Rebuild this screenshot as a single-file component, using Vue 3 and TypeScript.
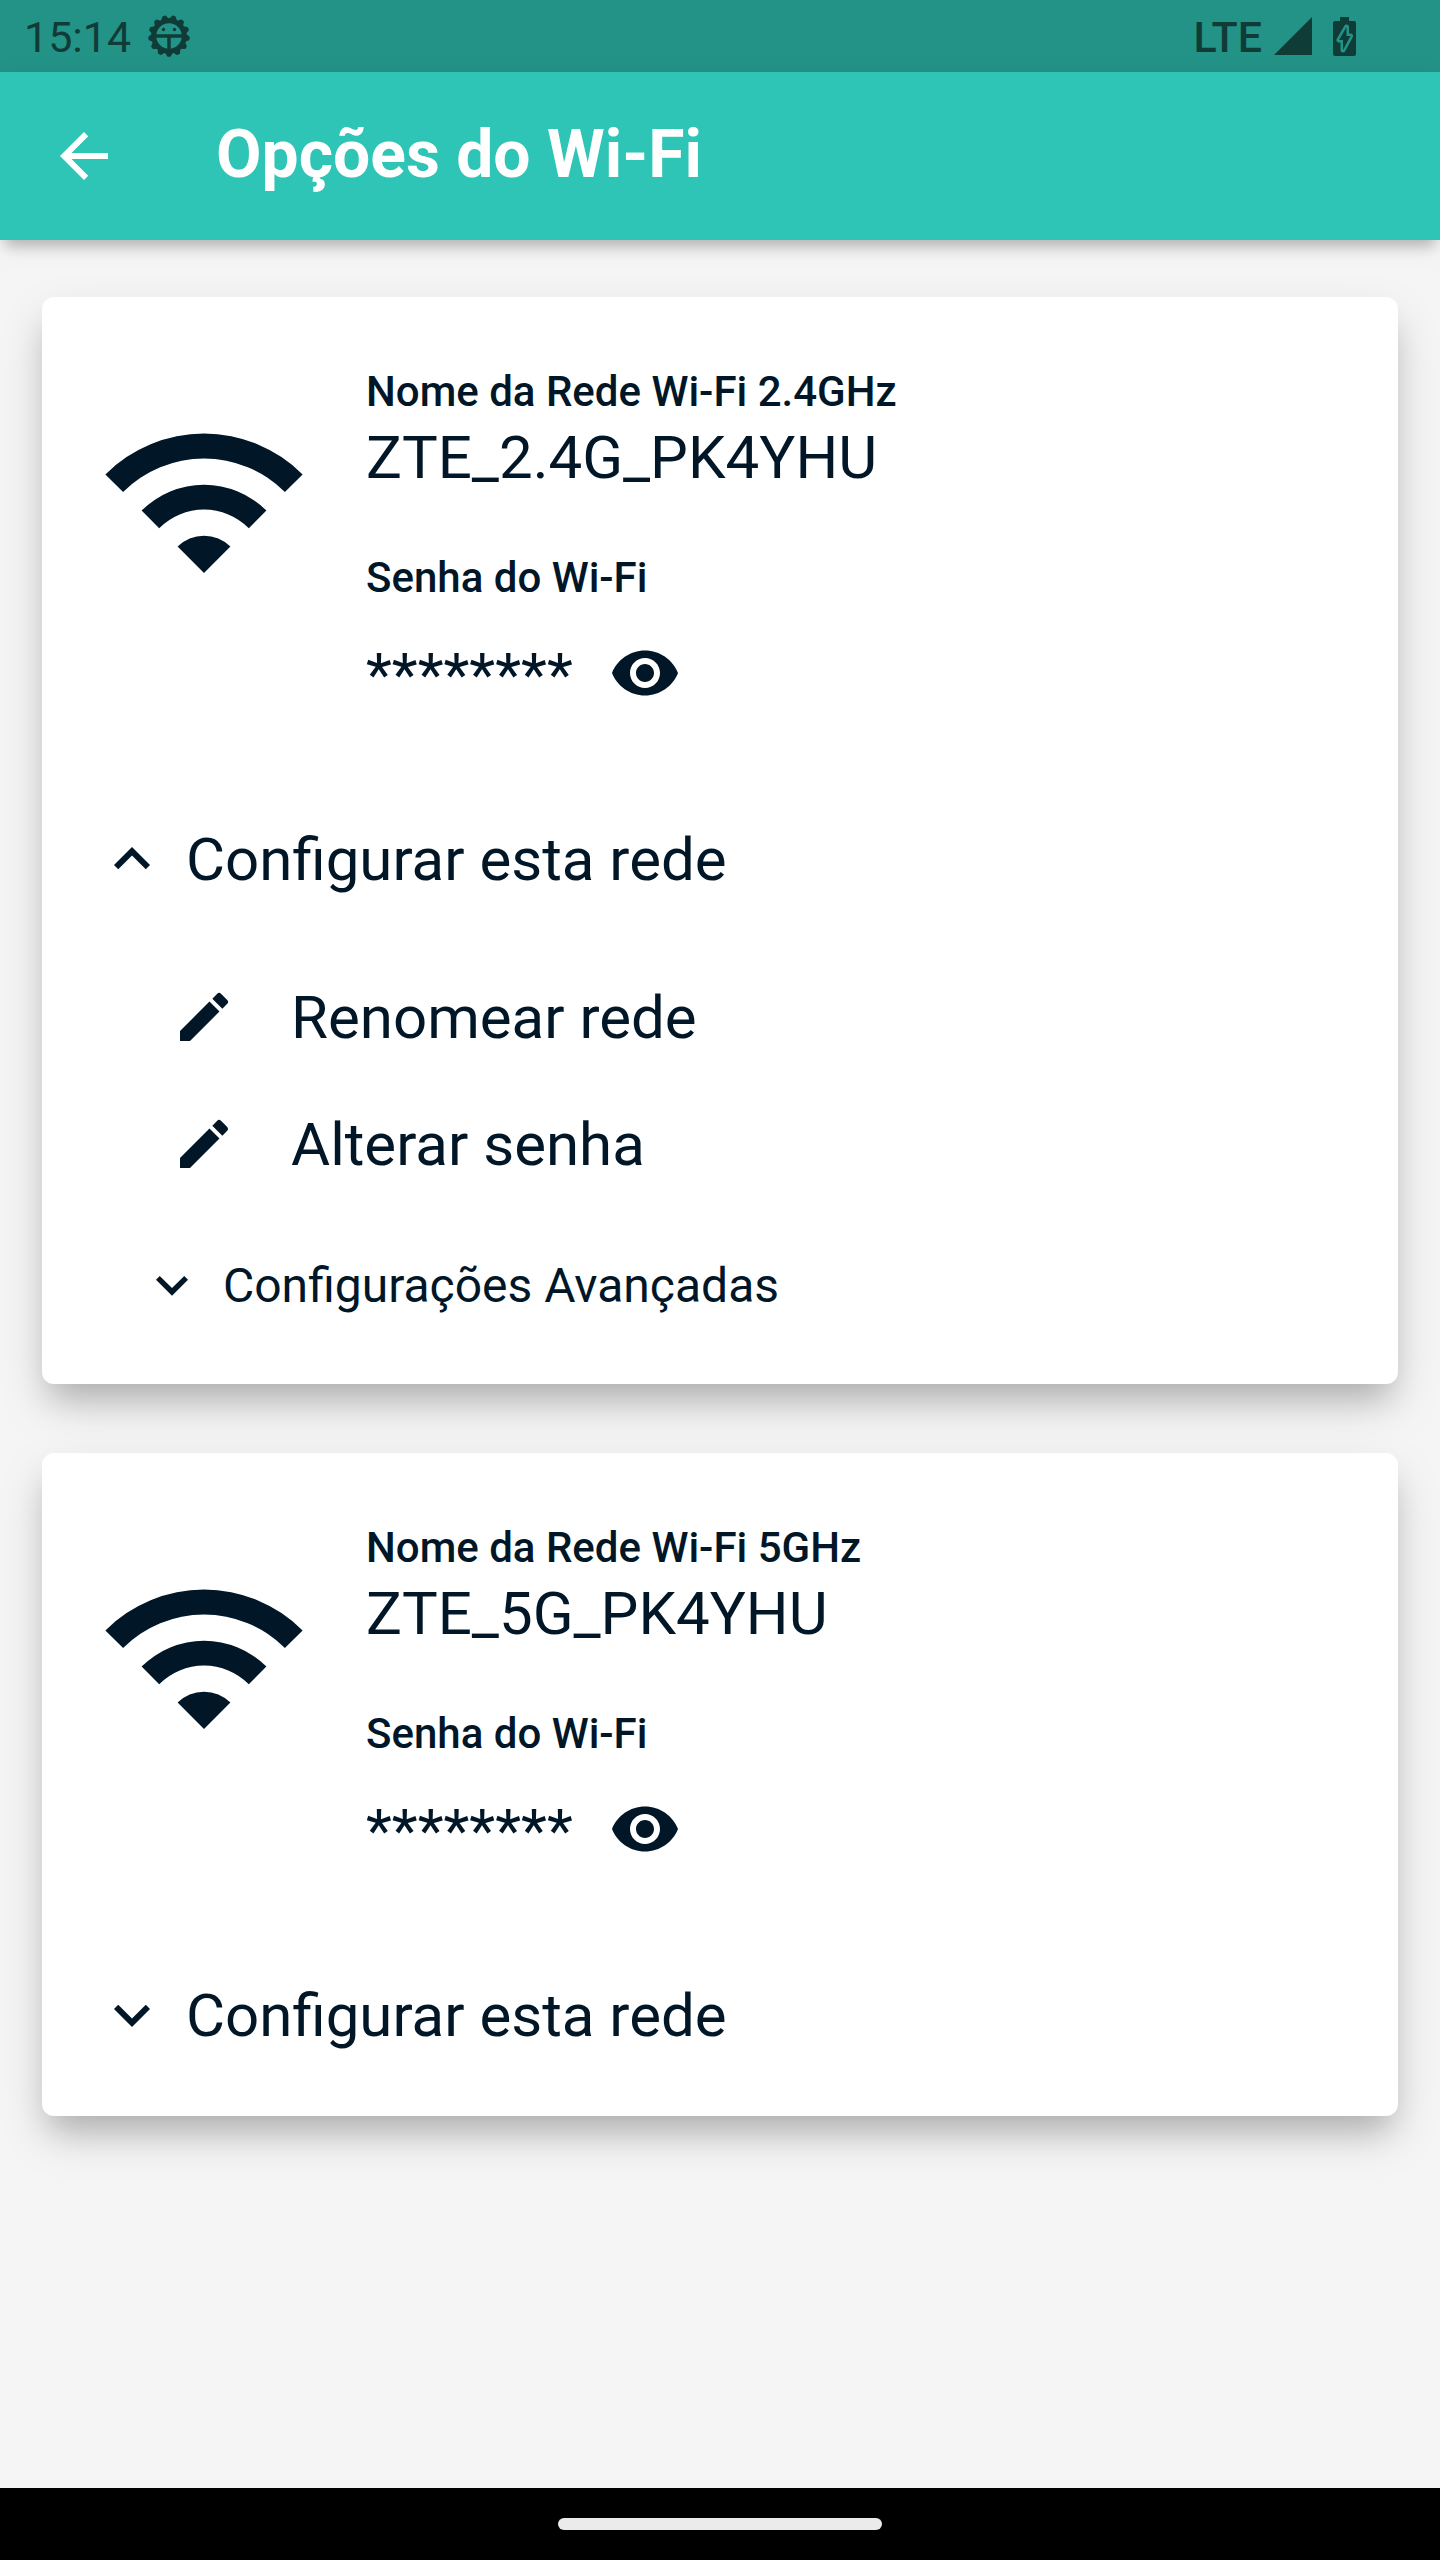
<script setup lang="ts">
import { reactive } from 'vue'

interface Network {
  id: string
  band: string
  ssid: string
  expanded: boolean
}

const networks = reactive<Network[]>([
  { id: 'wifi-24', band: '2.4GHz', ssid: 'ZTE_2.4G_PK4YHU', expanded: true },
  { id: 'wifi-5', band: '5GHz', ssid: 'ZTE_5G_PK4YHU', expanded: false },
])

const actions = ['Renomear rede', 'Alterar senha']

// One tooth points straight down, the others are spread evenly round the ring.
const teeth = Array.from({ length: 13 }, (_, i) => 180 + (i * 360) / 13)
</script>

<template>
  <div class="screen">
    <div class="status-bar">
      <span class="clock">15:14</span>
      <svg class="gear" viewBox="-21 -21 42 42" aria-hidden="true">
        <circle r="15.250" fill="none" stroke="currentColor" stroke-width="5" />
        <path
          v-for="angle in teeth"
          :key="angle"
          d="M-3.500-16L-1.200-20H1.200L3.500-16z"
          :transform="`rotate(${angle})`"
          fill="currentColor"
          stroke="currentColor"
          stroke-width="1.500"
          stroke-linejoin="round"
        />
        <path d="M-14 0H14M0 0V14" fill="none" stroke="currentColor" stroke-width="3.500" />
        <circle cx="-5.500" cy="-6.500" r="1.700" fill="currentColor" />
        <circle cx="5.500" cy="-6.500" r="1.700" fill="currentColor" />
      </svg>
      <span class="carrier">LTE</span>
      <svg class="signal" viewBox="0 0 38 38" aria-hidden="true">
        <path d="M38 0V38H0z" fill="currentColor" />
      </svg>
      <svg class="battery" viewBox="0 0 23 39" aria-hidden="true">
        <path d="M7 0h9v4h5a2 2 0 0 1 2 2v31a2 2 0 0 1-2 2H2a2 2 0 0 1-2-2V6a2 2 0 0 1 2-2h5z" fill="currentColor" />
        <path
          class="bolt"
          d="M13.500 10L6 23h4V33L17.500 19H13.500z"
          fill="currentColor"
          stroke-width="5"
          stroke-linejoin="round"
        />
      </svg>
    </div>

    <header class="app-bar">
      <button class="icon-button" type="button" aria-label="Voltar">
        <svg class="icon" viewBox="0 0 24 24" aria-hidden="true">
          <path d="M20 11H7.830l5.590-5.590L12 4l-8 8 8 8 1.410-1.410L7.830 13H20z" fill="currentColor" />
        </svg>
      </button>
      <h1 class="title">Opções do Wi-Fi</h1>
    </header>

    <main class="content">
      <section v-for="network in networks" :key="network.id" class="card">
        <div class="summary">
          <svg class="wifi" viewBox="-108 -150 216 216" aria-hidden="true">
            <path
              d="M0 0L-26.400-26.400A37.400 37.400 0 0 1 26.400-26.400zM-44.800-44.800L-62.400-62.400A88.300 88.300 0 0 1 62.400-62.400L44.800-44.800A63.300 63.300 0 0 0-44.800-44.800zM-80.900-80.900L-98.600-98.600A139.400 139.400 0 0 1 98.600-98.600L80.900-80.900A114.400 114.400 0 0 0-80.900-80.900z"
              fill="currentColor"
            />
          </svg>
          <dl class="details">
            <dt class="label">Nome da Rede Wi-Fi {{ network.band }}</dt>
            <dd class="ssid">{{ network.ssid }}</dd>
            <dt class="label">Senha do Wi-Fi</dt>
            <dd class="password">
              <span class="mask">********</span>
              <button class="icon-button" type="button" aria-label="Mostrar senha">
                <svg class="icon" viewBox="0 0 24 24" aria-hidden="true">
                  <path
                    d="M12 4.500C7 4.500 2.730 7.610 1 12c1.730 4.390 6 7.500 11 7.500s9.270-3.110 11-7.500c-1.730-4.390-6-7.500-11-7.500zM12 17c-2.760 0-5-2.240-5-5s2.240-5 5-5 5 2.240 5 5-2.240 5-5 5zm0-8c-1.660 0-3 1.340-3 3s1.340 3 3 3 3-1.340 3-3-1.340-3-3-3z"
                    fill="currentColor"
                  />
                </svg>
              </button>
            </dd>
          </dl>
        </div>

        <button
          class="toggle"
          type="button"
          :aria-expanded="network.expanded"
          @click="network.expanded = !network.expanded"
        >
          <svg class="icon" viewBox="0 0 24 24" aria-hidden="true">
            <path v-if="network.expanded" d="M12 8l-6 6 1.410 1.410L12 10.830l4.590 4.580L18 14z" fill="currentColor" />
            <path v-else d="M16.590 8.590L12 13.170 7.410 8.590 6 10l6 6 6-6z" fill="currentColor" />
          </svg>
          <span class="caption">Configurar esta rede</span>
        </button>

        <div v-if="network.expanded" class="submenu">
          <button v-for="action in actions" :key="action" class="action" type="button">
            <svg class="icon-small" viewBox="0 0 24 24" aria-hidden="true">
              <path
                d="M3 17.250V21h3.750L17.810 9.940l-3.750-3.750L3 17.250zM20.710 7.040a1 1 0 0 0 0-1.410l-2.340-2.340a1 1 0 0 0-1.410 0l-1.830 1.830 3.750 3.750 1.830-1.830z"
                fill="currentColor"
              />
            </svg>
            <span class="caption">{{ action }}</span>
          </button>
          <button class="toggle advanced" type="button" aria-expanded="false">
            <svg class="icon-small" viewBox="0 0 24 24" aria-hidden="true">
              <path d="M16.590 8.590L12 13.170 7.410 8.590 6 10l6 6 6-6z" fill="currentColor" />
            </svg>
            <span class="caption">Configurações Avançadas</span>
          </button>
        </div>
      </section>
    </main>

    <div class="nav-bar"><div class="handle"></div></div>
  </div>
</template>

<style>
body {
  margin: 0;
}
</style>

<style scoped>
.screen {
  display: flex;
  flex-direction: column;
  min-height: 100vh;
  background: #f5f5f5;
  color: #011627;
  font-family: Roboto, 'Liberation Sans', sans-serif;
}

button {
  padding: 0;
  border: 0;
  background: none;
  color: inherit;
  font: inherit;
  text-align: left;
  cursor: pointer;
}

svg {
  display: block;
  flex: none;
}

.status-bar {
  display: flex;
  align-items: center;
  height: 72px;
  padding: 0 84px 0 24px;
  background: #239388;
  color: #103c37;
  font-size: 43px;
  line-height: 50px;
}

.clock,
.carrier,
.caption {
  padding-top: 2px;
}

.gear {
  width: 42px;
  height: 42px;
  margin-left: 17px;
}

.carrier {
  margin-left: auto;
  font-weight: 500;
}

.signal {
  width: 38px;
  height: 38px;
  margin-left: 12px;
}

.battery {
  width: 23px;
  height: 39px;
  margin-left: 21px;
}

.bolt {
  stroke: #239388;
  paint-order: stroke;
}

.app-bar {
  display: flex;
  align-items: center;
  gap: 96px;
  height: 168px;
  padding: 0 48px;
  background: #2ec4b6;
  color: #fff;
  box-shadow: 0 12px 12px -6px rgba(0, 0, 0, 0.2), 0 6px 24px rgba(0, 0, 0, 0.1);
}

.title {
  margin: 0;
  padding-bottom: 3px;
  font-size: 66px;
  line-height: 78px;
  font-weight: 700;
}

.icon-button {
  flex: none;
}

.icon {
  width: 72px;
  height: 72px;
}

.icon-small {
  width: 64px;
  height: 64px;
}

.content {
  flex: 1;
  display: flex;
  flex-direction: column;
  gap: 69px;
  padding: 57px 42px;
}

.card {
  padding: 70px 54px 64px;
  border-radius: 12px;
  background: #fff;
  box-shadow: 0 21px 30px -9px rgba(0, 0, 0, 0.17), 0 21px 48px -3px rgba(0, 0, 0, 0.17);
}

.summary {
  display: flex;
  gap: 54px;
}

.wifi {
  width: 216px;
  height: 216px;
  margin-top: 56px;
}

.details {
  margin: 0;
}

.label {
  font-size: 42px;
  line-height: 50px;
  font-weight: 500;
}

.ssid {
  margin: 5px 0 59px;
  font-size: 60px;
  line-height: 72px;
}

.password {
  display: flex;
  align-items: center;
  gap: 36px;
  margin: 32px 0 0;
}

.mask {
  padding-top: 4px;
  font-size: 60px;
  line-height: 72px;
}

.toggle {
  display: flex;
  align-items: center;
  gap: 18px;
  margin-top: 111px;
  font-size: 60px;
  line-height: 72px;
}

.submenu {
  display: flex;
  flex-direction: column;
  align-items: flex-start;
  gap: 53px;
  padding: 84px 0 1px 44px;
}

.action {
  display: flex;
  align-items: center;
  gap: 55px;
  padding-left: 32px;
  font-size: 60px;
  line-height: 72px;
}

.advanced {
  gap: 19px;
  height: 68px;
  margin-top: 17px;
  font-size: 48px;
  line-height: 58px;
}

.nav-bar {
  display: flex;
  align-items: center;
  justify-content: center;
  height: 72px;
  background: #000;
}

.handle {
  width: 324px;
  height: 12px;
  border-radius: 6px;
  background: #ebebeb;
}
</style>
